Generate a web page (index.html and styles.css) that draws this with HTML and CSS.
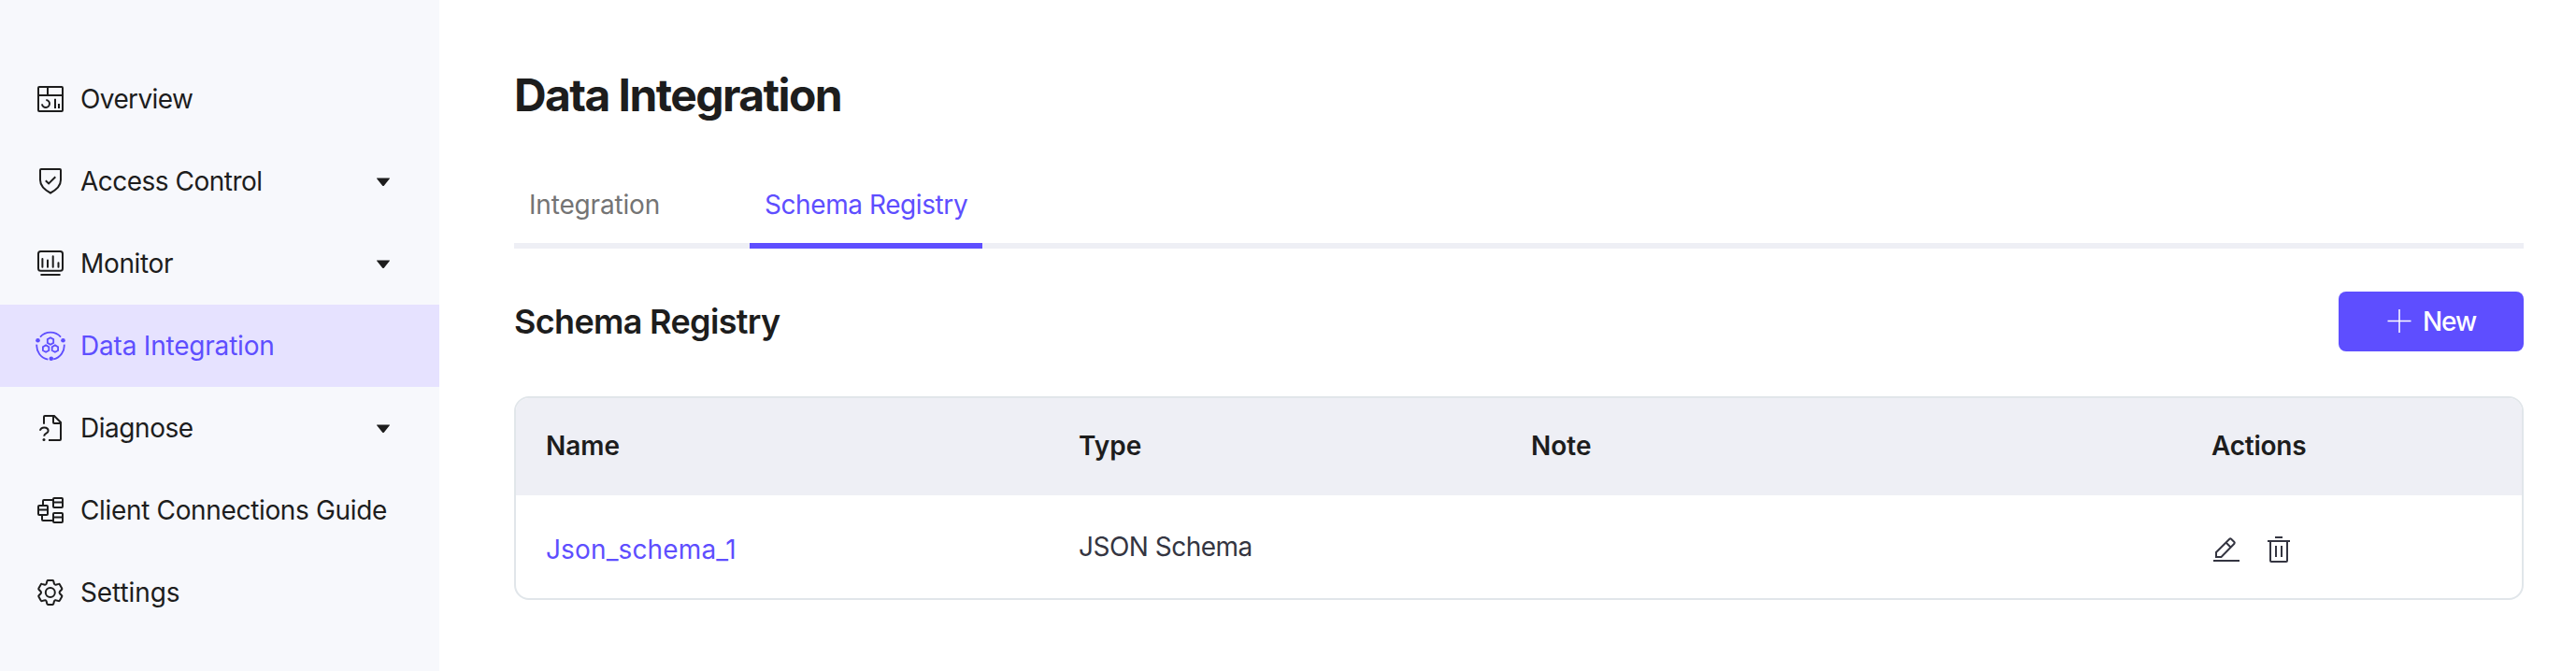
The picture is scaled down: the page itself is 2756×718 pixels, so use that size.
FILE: index.html
```
<!DOCTYPE html>
<html lang="en">
<head>
<meta charset="utf-8">
<title>Data Integration</title>
<link rel="stylesheet" href="styles.css">
</head>
<body>
<div class="layout">
  <nav class="sidebar">
    <a class="item">
      <svg class="icon" viewBox="0 0 32 32"><rect x="3" y="3" width="26" height="26" rx="1"/><path d="M3 12h26M13 3v9M21 15.7v10.2M25 21v4.9M11.3 17a4 4 0 1 1-4.3 4.3"/></svg>
      <span class="label overview">Overview</span>
    </a>
    <a class="item">
      <svg class="icon" viewBox="0 0 32 32"><path d="M6 3h20a1 1 0 0 1 1 1v10.500c0 6-4.500 10.500-11 14-6.500-3.500-11-8-11-14V4a1 1 0 0 1 1-1z"/><path d="M10.800 15.200l3.300 3.200 7.200-7.100"/></svg>
      <span class="label access">Access Control</span>
      <svg class="caret" viewBox="0 0 16 10"><path d="M1.500.5h13q1 0 .3.8L8.800 8.700q-.8.800-1.600 0L1.200 1.300Q.5.500 1.500.5z"/></svg>
    </a>
    <a class="item">
      <svg class="icon" viewBox="0 0 32 32"><rect x="3" y="3" width="26" height="20.800" rx="2.500"/><path stroke-linecap="round" d="M6.200 28h19.600M7.400 11v8.700M13 12.500v7.200M18.700 8.200v11.500M24.500 15.200v4.500"/></svg>
      <span class="label monitor">Monitor</span>
      <svg class="caret" viewBox="0 0 16 10"><path d="M1.500.5h13q1 0 .3.8L8.800 8.700q-.8.800-1.600 0L1.200 1.300Q.5.500 1.500.5z"/></svg>
    </a>
    <a class="item active">
      <svg class="icon" viewBox="0 0 32 32"><path stroke-width="1.800" d="M5 6.600a14.700 14.700 0 0 1 22 0M30.700 14.600a14.900 14.900 0 0 1-11.500 15.800M1.300 14.600A14.900 14.900 0 0 0 13.400 30.600"/><g class="dots"><circle cx="2.500" cy="10.200" r="2.300"/><circle cx="29.500" cy="10.200" r="2.300"/><circle cx="16.800" cy="29.700" r="2.300"/></g><path stroke-width="1.800" d="M16 7.300l3.200 1.800v3.800L16 14.700l-3.200-1.800V9.100zM11.100 15.400l3.200 1.800v3.800l-3.200 1.800-3.200-1.800v-3.800zM20.900 15.400l3.200 1.800v3.800l-3.200 1.800-3.200-1.800v-3.800z"/></svg>
      <span class="label integration">Data Integration</span>
    </a>
    <a class="item">
      <svg class="icon" viewBox="0 0 32 32"><path d="M9 11.800V4a1 1 0 0 1 1-1h10l7 7v18a1 1 0 0 1-1 1H14M19 3v7a1 1 0 0 0 1 1h7M5 18.800c0-4.400 8.600-4.400 8.600.2 0 3-4.400 2.400-4.400 5.800"/><circle class="dot" cx="9" cy="28.500" r="1.500"/></svg>
      <span class="label diagnose">Diagnose</span>
      <svg class="caret" viewBox="0 0 16 10"><path d="M1.500.5h13q1 0 .3.8L8.800 8.700q-.8.800-1.600 0L1.200 1.300Q.5.500 1.500.5z"/></svg>
    </a>
    <a class="item">
      <svg class="icon" viewBox="0 0 32 32"><rect x="3" y="11" width="10" height="10" rx="1"/><rect x="19" y="3" width="10" height="10" rx="1"/><rect x="19" y="19" width="10" height="10" rx="1"/><path d="M3 15.500h10M19 7.500h10M19 23.500h10M8 11V6a1 1 0 0 1 1-1h10M7 21v5a1 1 0 0 0 1 1h11"/></svg>
      <span class="label client">Client Connections Guide</span>
    </a>
    <a class="item">
      <svg class="icon" viewBox="0 0 32 32"><g transform="translate(15.800 16)"><path d="M-4.200-9.200L-3.400-12.300Q-3.200-13-2.400-13H2.400Q3.200-13 3.400-12.300L4.200-9.200Q5-8 5.900-8.300L9-9.100Q9.700-9.300 10.100-8.600L12.400-4.500Q12.800-3.800 12.300-3.300L10.100-1Q9.400 0 10.100 1L12.300 3.300Q12.800 3.800 12.400 4.500L10.100 8.600Q9.700 9.300 9 9.100L5.900 8.300Q5 8 4.200 9.200L3.400 12.300Q3.200 13 2.400 13H-2.400Q-3.200 13-3.400 12.300L-4.200 9.200Q-5 8-5.900 8.300L-9 9.100Q-9.700 9.300-10.100 8.600L-12.400 4.500Q-12.800 3.800-12.300 3.300L-10.100 1Q-9.400 0-10.100-1L-12.300-3.300Q-12.800-3.800-12.400-4.500L-10.100-8.600Q-9.700-9.300-9-9.100L-5.900-8.300Q-5-8-4.200-9.200z"/><circle r="5"/></g></svg>
      <span class="label settings">Settings</span>
    </a>
  </nav>
  <main class="main">
    <h1 class="title">Data Integration</h1>
    <div class="tabs">
      <a class="tab first">Integration</a>
      <a class="tab current">Schema Registry</a>
    </div>
    <div class="section">
      <h2 class="heading">Schema Registry</h2>
      <button class="new">
        <svg class="plus" viewBox="0 0 26 26"><path d="M0.500 12.500h25M13 0v25"/></svg>
        <span>New</span>
      </button>
    </div>
    <div class="table">
      <div class="row head">
        <span class="name">Name</span><span class="name">Type</span><span class="name">Note</span><span class="actions-head">Actions</span>
      </div>
      <div class="row body">
        <a class="link">Json_schema_1</a><span class="type">JSON Schema</span><span></span>
        <span class="actions">
          <svg class="icon" viewBox="0 0 32 32"><path d="M2 28h28M5 24v-5L19.300 4.700q.9-.8 1.800 0l3.300 3.300q.8.900 0 1.800L10.500 24zM15.500 8.500l5.200 5.200"/></svg>
          <svg class="icon" viewBox="0 0 32 32"><path d="M12 3h8M4 7h24M7 7v21a1 1 0 0 0 1 1h16a1 1 0 0 0 1-1V7M13 12v12M19 12v12"/></svg>
        </span>
      </div>
    </div>
  </main>
</div>
</body>
</html>
```
FILE: styles.css
```
* { box-sizing: border-box; }
body { margin: 0; background: #fff; color: #1d1d1d; font: 400 28px/40px Inter, sans-serif; }
.layout { display: flex; height: 718px; }
.sidebar { width: 470px; flex: none; padding-top: 62px; background: #f7f8fc; }
.item { display: flex; align-items: center; height: 88px; padding: 0 52px 0 38px; gap: 16px; white-space: nowrap; }
.item.active { background: #e6e2ff; color: #5e4eff; }
.icon { width: 32px; height: 32px; flex: none; fill: none; stroke: currentColor; stroke-width: 2; }
.dots, .dot { fill: currentColor; stroke: none; }
.caret { width: 16px; height: 10px; margin: 2px 0 0 auto; fill: currentColor; }
.overview { letter-spacing: -.61px; }
.access { letter-spacing: -.51px; }
.monitor { letter-spacing: -.35px; }
.integration { letter-spacing: -.2px; }
.diagnose { letter-spacing: -.45px; }
.client { letter-spacing: -.34px; }
.settings { letter-spacing: -.09px; }
.main { flex: 1; padding: 72px 56px 0 80px; }
.title { margin: 0; font-size: 48px; line-height: 60px; font-weight: 650; letter-spacing: -1.6px; }
.tabs { display: flex; gap: 80px; height: 76px; margin-top: 58px; border-bottom: 6px solid #eeeff5; }
.tab { height: 76px; padding: 9px 16px 0; color: #747474; white-space: nowrap; }
.tab.first { width: 172px; letter-spacing: -.18px; }
.tab.current { width: 249px; border-bottom: 6px solid #5e4eff; color: #5e4eff; letter-spacing: -.42px; }
.section { display: flex; justify-content: space-between; align-items: center; height: 64px; margin-top: 46px; }
.heading { margin: 0; font-size: 36px; line-height: 48px; font-weight: 600; letter-spacing: -.68px; }
.new { display: flex; align-items: center; gap: 12px; width: 198px; height: 64px; padding: 0 0 0 52px; border: 0; border-radius: 8px; background: #5e4eff; color: #fff; font: 500 28px/40px Inter, sans-serif; letter-spacing: -1.08px; }
.plus { width: 26px; height: 26px; stroke: #fff; stroke-width: 1.5; }
.table { height: 218px; margin-top: 48px; border: 2px solid #e1e6ea; border-radius: 16px; overflow: hidden; }
.row { display: grid; grid-template-columns: 570px 484px 728px 1fr; align-items: center; padding-left: 32px; }
.head { height: 104px; padding-bottom: 2px; background: #eeeff5; font-weight: 600; }
.actions-head { letter-spacing: -.25px; }
.body { height: 110px; color: #343541; }
.link { padding-top: 6px; color: #5e4eff; letter-spacing: .14px; }
.type { letter-spacing: -.52px; }
.actions { display: flex; gap: 24px; padding-top: 6px; }
```
